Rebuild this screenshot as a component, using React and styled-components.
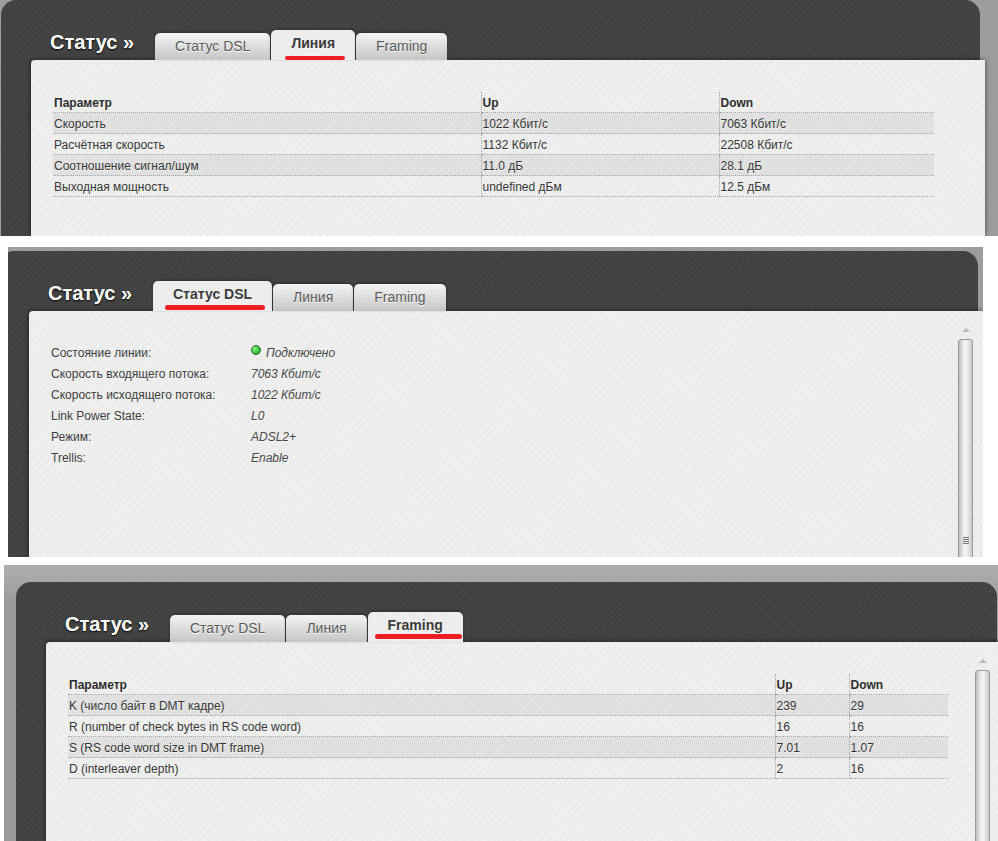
import React from 'react';
import styled, { createGlobalStyle } from 'styled-components';

const Global = createGlobalStyle`
  html, body { margin: 0; padding: 0; background: #fff; }
  body { font-family: "Liberation Sans", Arial, sans-serif; }
  #root { width: 998px; }
`;

const Page = styled.div`
  width: 998px;
  height: 841px;
  overflow: hidden;
  display: flex;
  flex-direction: column;
  background: #fff;
`;

const Shot = styled.section`
  flex: none;
  box-sizing: border-box;
  width: ${p => p.$w}px;
  height: ${p => p.$h}px;
  margin: ${p => p.$mt}px 0 0 ${p => p.$ml}px;
  padding: ${p => p.$pt}px 0 0 ${p => p.$pl}px;
  overflow: hidden;
  background: ${p => p.$bg};
  display: flex;
  flex-direction: column;
`;

const Frame = styled.div`
  flex: 1;
  min-height: 0;
  width: ${p => p.$w}px;
  margin-left: ${p => p.$ml}px;
  box-sizing: border-box;
  border-radius: 15px 15px 0 0;
  background-color: #424242;
  background-image:
    repeating-linear-gradient(45deg, rgba(255,255,255,0.025) 0 1px, transparent 1px 3px),
    repeating-linear-gradient(-45deg, rgba(0,0,0,0.05) 0 1px, transparent 1px 4px);
  display: flex;
  flex-direction: column;
`;

const Header = styled.div`
  flex: none;
  height: 60px;
  box-sizing: border-box;
  padding-left: 49px;
  display: flex;
  align-items: flex-end;
  position: relative;
  z-index: 2;
`;

const Title = styled.h1`
  flex: none;
  width: 105px;
  margin: 0 0 6px;
  font: bold 20px/24px "Liberation Sans", Arial, sans-serif;
  color: #fff;
  white-space: nowrap;
  text-shadow: 0 1px 2px rgba(0, 0, 0, 0.95);
`;

const Tabs = styled.nav`
  display: flex;
  align-items: flex-end;
  gap: 1px;
`;

const Tab = styled.div`
  position: relative;
  box-sizing: border-box;
  height: ${p => (p.$active ? 30 : 27)}px;
  padding: 5px 20px 0;
  border-radius: 5px 5px 0 0;
  font-size: 14px;
  line-height: 16px;
  white-space: nowrap;
  font-weight: ${p => (p.$active ? 'bold' : 'normal')};
  color: ${p => (p.$active ? '#3a3a3a' : '#5a5a5a')};
  text-shadow: 0 1px 0 rgba(255, 255, 255, 0.9);
  background: ${p => (p.$active ? '#ededed' : 'linear-gradient(#f4f4f4, #d8d8d8 60%, #c6c6c6)')};
  box-shadow: 0 -1px 3px rgba(0, 0, 0, 0.35);
`;

const Mark = styled.span`
  position: absolute;
  left: ${p => p.$l}px;
  right: ${p => p.$r}px;
  top: ${p => p.$t}px;
  height: ${p => p.$h}px;
  border-radius: 3px;
  background: #ee1c25;
`;

const Content = styled.div`
  flex: 1;
  min-height: 0;
  margin-left: 30px;
  margin-right: -5px;
  border-radius: 4px 0 0 0;
  background-color: #ededed;
  background-image:
    repeating-linear-gradient(45deg, rgba(0,0,0,0.012) 0 1px, transparent 1px 5px),
    repeating-linear-gradient(-45deg, rgba(255,255,255,0.3) 0 1px, transparent 1px 6px);
  box-shadow: 0 0 5px rgba(0, 0, 0, 0.6);
  display: flex;
  overflow: hidden;
  position: relative;
  z-index: 1;
`;

const Main = styled.div`
  flex: 1;
  min-width: 0;
  padding: 32px 0 0 22px;
`;

const Table = styled.table`
  width: ${p => p.$w}px;
  table-layout: fixed;
  border-collapse: collapse;
  font-size: 12px;
  color: #333;
  text-shadow: 0 1px 0 rgba(255, 255, 255, 0.7);

  th, td {
    height: 19px;
    padding: 1px 1px 0;
    text-align: left;
    vertical-align: middle;
    white-space: nowrap;
    border-bottom: 1px dotted #a3a3a3;
  }
  th { font-weight: bold; color: #2c2c2c; }
  th + th, td + td { border-left: 1px dotted #a3a3a3; }
  tbody tr:nth-child(odd) { background: rgba(0, 0, 0, 0.055); }
`;

const InfoList = styled.dl`
  margin: -1px 0 0;
  display: grid;
  grid-template-columns: 200px auto;
  grid-auto-rows: 21px;
  align-items: center;
  font-size: 12px;
  color: #3a3a3a;
  text-shadow: 0 1px 0 rgba(255, 255, 255, 0.7);
  dt, dd { margin: 0; white-space: nowrap; }
  dd { font-style: italic; color: #444; display: flex; align-items: center; }
`;

const Dot = styled.span`
  width: 8px;
  height: 8px;
  margin: -5px 5px 0 0;
  border-radius: 50%;
  border: 1px solid #2d6a2d;
  background: radial-gradient(circle at 35% 35%, #8cf28c, #2fbf2f 60%, #1f8f1f);
`;

const Scroll = styled.div`
  flex: none;
  width: 15px;
  margin-right: ${p => p.$mr}px;
  padding-top: 17px;
  display: flex;
  flex-direction: column;
  align-items: center;
`;

const Arrow = styled.span`
  width: 0;
  height: 0;
  border-left: 4px solid transparent;
  border-right: 4px solid transparent;
  border-bottom: 4px solid #b9b9b9;
  margin-bottom: 7px;
`;

const Thumb = styled.div`
  flex: none;
  box-sizing: border-box;
  width: 15px;
  height: 402px;
  border: 1px solid #9a9a9a;
  border-radius: 3px 3px 0 0;
  background: linear-gradient(90deg, #bcbcbc, #ececec 35%, #f4f4f4 55%, #c9c9c9);
  display: flex;
  align-items: center;
  justify-content: center;
`;

const Grip = styled.span`
  width: 6px;
  height: 7px;
  background: repeating-linear-gradient(#777 0 1px, transparent 1px 2px);
`;

const TABS = ['Статус DSL', 'Линия', 'Framing'];

function Screen({ shot, frame, active, mark, scroll, children }) {
  return (
    <Shot {...shot}>
      <Frame $w={frame.w} $ml={frame.ml}>
        <Header>
          <Title>Статус »</Title>
          <Tabs>
            {TABS.map((t, i) => (
              <Tab key={t} $active={i === active}>
                {t}
                {i === active && <Mark $l={mark.l} $r={mark.r} $t={mark.t} $h={mark.h} />}
              </Tab>
            ))}
          </Tabs>
        </Header>
        <Content>
          <Main>{children}</Main>
          {scroll != null && (
            <Scroll $mr={scroll}>
              <Arrow />
              <Thumb><Grip /></Thumb>
            </Scroll>
          )}
        </Content>
      </Frame>
    </Shot>
  );
}

function DataTable({ width, cols, rows }) {
  return (
    <Table $w={width}>
      <colgroup>
        {cols.map((c, i) => <col key={i} style={{ width: c }} />)}
      </colgroup>
      <thead>
        <tr><th>Параметр</th><th>Up</th><th>Down</th></tr>
      </thead>
      <tbody>
        {rows.map(r => (
          <tr key={r[0]}>{r.map((c, i) => <td key={i}>{c}</td>)}</tr>
        ))}
      </tbody>
    </Table>
  );
}

const lineRows = [
  ['Скорость', '1022 Кбит/с', '7063 Кбит/с'],
  ['Расчётная скорость', '1132 Кбит/с', '22508 Кбит/с'],
  ['Соотношение сигнал/шум', '11.0 дБ', '28.1 дБ'],
  ['Выходная мощность', 'undefined дБм', '12.5 дБм'],
];

const framingRows = [
  ['K (число байт в DMT кадре)', '239', '29'],
  ['R (number of check bytes in RS code word)', '16', '16'],
  ['S (RS code word size in DMT frame)', '7.01', '1.07'],
  ['D (interleaver depth)', '2', '16'],
];

const dslInfo = [
  ['Состояние линии:', 'Подключено', true],
  ['Скорость входящего потока:', '7063 Кбит/с'],
  ['Скорость исходящего потока:', '1022 Кбит/с'],
  ['Link Power State:', 'L0'],
  ['Режим:', 'ADSL2+'],
  ['Trellis:', 'Enable'],
];

export default function App() {
  return (
    <Page>
      <Global />
      <Screen
        shot={{ $w: 998, $h: 236, $mt: 0, $ml: 0, $pt: 0, $pl: 1, $bg: '#9d9d9d' }}
        frame={{ w: 979, ml: 0 }}
        active={1}
        mark={{ l: 14, r: 10, t: 26, h: 4 }}
      >
        <DataTable width={881} cols={['428px', '238px', '215px']} rows={lineRows} />
      </Screen>

      <Screen
        shot={{ $w: 975, $h: 310, $mt: 11, $ml: 8, $pt: 4, $pl: 0, $bg: '#9d9d9d' }}
        frame={{ w: 979, ml: -9 }}
        active={0}
        mark={{ l: 12, r: 7, t: 24, h: 5 }}
        scroll={10}
      >
        <InfoList>
          {dslInfo.map(([k, v, dot]) => (
            <React.Fragment key={k}>
              <dt>{k}</dt>
              <dd>{dot && <Dot />}{v}</dd>
            </React.Fragment>
          ))}
        </InfoList>
      </Screen>

      <Screen
        shot={{ $w: 994, $h: 276, $mt: 8, $ml: 4, $pt: 17, $pl: 12, $bg: 'linear-gradient(#aeaeae, #9a9a9a 40px)' }}
        frame={{ w: 981, ml: 0 }}
        active={2}
        mark={{ l: 7, r: 1, t: 22, h: 5 }}
        scroll={12}
      >
        <DataTable width={880} cols={['707px', '74px', '99px']} rows={framingRows} />
      </Screen>
    </Page>
  );
}
